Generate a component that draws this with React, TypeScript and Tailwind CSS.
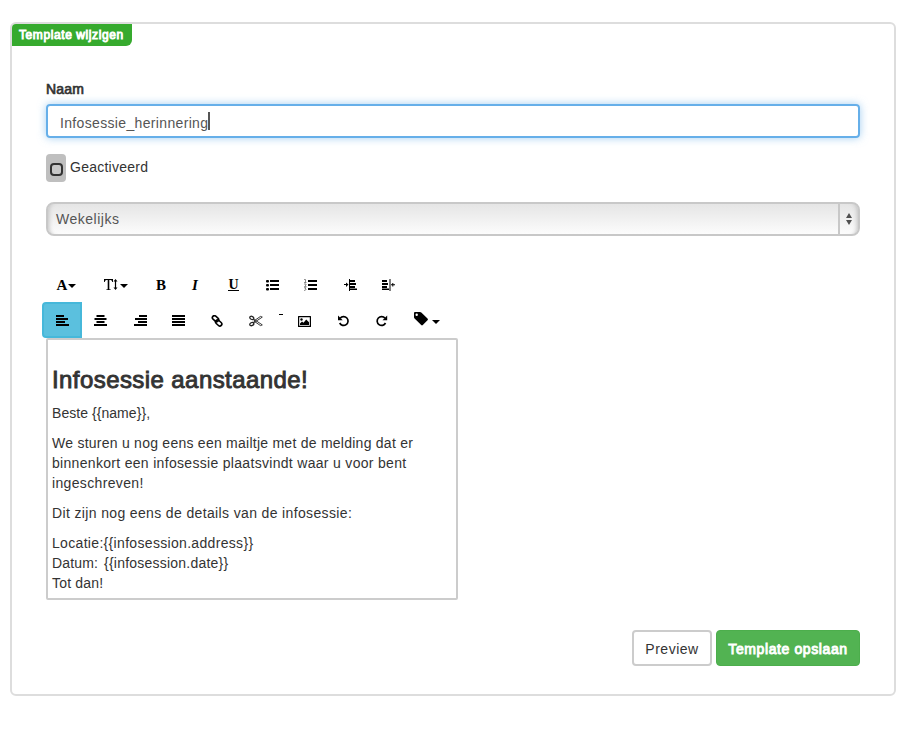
import type { ReactNode } from 'react';

function Glyph({ children, w = 13, h = 12, className = '' }: { children: ReactNode; w?: number; h?: number; className?: string }) {
  return (
    <svg width={w} height={h} viewBox={`0 0 ${w} ${h}`} className={`block shrink-0 ${className}`} fill="black">
      {children}
    </svg>
  );
}

const Caret = ({ className = '' }: { className?: string }) => (
  <Glyph w={8} h={4} className={className}>
    <path d="M0 0h8L4 4z" />
  </Glyph>
);

function Lines({ rows }: { rows: [number, number][] }) {
  return (
    <Glyph>
      {rows.map(([x, w], i) => (
        <rect key={i} x={x} y={i * 3} width={w} height={2} />
      ))}
    </Glyph>
  );
}

function Cell({ className, children }: { className: string; children: ReactNode }) {
  return <button type="button" className={`flex h-9 shrink-0 items-start ${className}`}>{children}</button>;
}

const serif = "font-['Liberation_Serif',serif] text-[15px] leading-4 font-bold text-black";

function Toolbar() {
  return (
    <div className="-ml-1">
      <div className="flex pl-[14px]">
        <Cell className="w-12 pt-[11px]">
          <span className={`${serif} w-[12px]`}>A</span>
          <Caret className="mt-[7px]" />
        </Cell>
        <Cell className="w-[52px] pt-[13px]">
          <Glyph w={14}>
            <path d="M0 0h9v3h-.7Q8 1 6.5.9H5.3v8.8q0 .8 1.5.9v.4H2.2v-.4q1.5-.1 1.5-.9V.9H2.5Q1 1 .7 3H0zM11.5 0l2 2.5h-1.4v6h1.4l-2 2.5-2-2.5h1.4v-6H9.5z" />
          </Glyph>
          <Caret className="mt-[5px] ml-0.5" />
        </Cell>
        <Cell className="w-9 pt-[11px]"><span className={serif}>B</span></Cell>
        <Cell className="w-9 pt-[11px]"><span className={`${serif} italic`}>I</span></Cell>
        <Cell className="w-[38px] pt-[13px]">
          <span className="h-3 w-[11px] border-b border-black text-center font-['Liberation_Serif',serif] text-sm leading-[11px] font-bold text-black">U</span>
        </Cell>
        <Cell className="w-[38px] pt-[14px]">
          <Glyph>
            {[0, 4, 8].map((y) => (
              <g key={y}><rect y={y} width="3" height="2.5" rx="1" /><rect x="4" y={y} width="9" height="2" /></g>
            ))}
          </Glyph>
        </Cell>
        <Cell className="w-10 pt-[13px]">
          <Glyph>
            <path d="M4 1h9v2H4zM4 5h9v2H4zM4 9h9v2H4z" />
            <path d="M0 .5h1.5v3M0 3.5h2.5M0 5h2v1L.5 7.5h2M0 8.7h2L1 10q1 0 1 .6T0 11.5" fill="none" stroke="#555" strokeWidth=".65" />
          </Glyph>
        </Cell>
        <Cell className="w-[38px] pt-[13px]">
          <Glyph>
            <path d="M5 0h1v12H5zM0 5h4v1H0zM2 3.5l2.5 2L2 8zM6 1h5v2H6zM6 4h6v2H6zM6 7h5v2H6zM6 9.5h7v1.5H6z" />
          </Glyph>
        </Cell>
        <Cell className="w-[38px] pt-[13px]">
          <Glyph>
            <path d="M7.5 0h1v12h-1zM9 5.2h4v1H9zM10.3 4h1v3.4h-1zM0 1h5v2H0zM0 4h6v2H0zM0 7h5v2H0zM0 9.5h7v1.5H0z" />
          </Glyph>
        </Cell>
      </div>
      <div className="flex">
        <Cell className="w-10 rounded-l-[4px] border-2 border-[#46b8da] bg-[#5bc0de] pt-[11px] pl-3">
          <Lines rows={[[0, 8], [0, 12], [0, 9], [0, 13]]} />
        </Cell>
        <Cell className="w-10 pt-[13px] pl-3"><Lines rows={[[2.5, 8], [0.5, 12], [2.5, 8], [0, 13]]} /></Cell>
        <Cell className="w-[38px] pt-[13px] pl-3"><Lines rows={[[5, 8], [1, 12], [4, 9], [0, 13]]} /></Cell>
        <Cell className="w-[39px] pt-[13px] pl-3"><Lines rows={[[0, 13], [0, 13], [0, 13], [0, 13]]} /></Cell>
        <Cell className="w-[38px] pt-[13px] pl-3">
          <Glyph h={13}>
            <g fill="none" stroke="black" strokeWidth="1.6">
              <rect x="1" y="1.7" width="7" height="4" rx="2" transform="rotate(42 4.5 3.7)" />
              <rect x="4.2" y="6" width="7" height="4" rx="2" transform="rotate(42 7.7 8)" />
            </g>
          </Glyph>
        </Cell>
        <Cell className="w-[30px] pt-[13px] pl-3">
          <Glyph w={14} h={13}>
            <g fill="none" stroke="#222" strokeWidth="1.3">
              <ellipse cx="2.8" cy="2.9" rx="2.1" ry="1.5" transform="rotate(25 2.8 2.9)" />
              <ellipse cx="2.8" cy="9.1" rx="2.1" ry="1.5" transform="rotate(-25 2.8 9.1)" />
              <path d="M4.5 4l8.8 5.9-1.8.7L4.8 6M4.5 8l8.8-5.9-1.8-.7L4.8 6" strokeWidth=".9" />
            </g>
          </Glyph>
        </Cell>
        <Cell className="w-[19px] pt-[12px] pl-3"><span className="h-px w-1 bg-black" /></Cell>
        <Cell className="w-10 pt-[14px] pl-3">
          <Glyph>
            <path fillRule="evenodd" d="M.5 0h12q.5 0 .5.5v10q0 .5-.5.5H.5q-.5 0-.5-.5V.5Q0 0 .5 0zM1.2 1.2v8.6h10.6V1.2z" />
            <circle cx="3.5" cy="3.5" r="1.2" /><path d="M2 9V7.5l2-2 1.5 1.3L8.2 3.5 11 6.2V9z" />
          </Glyph>
        </Cell>
        <Cell className="w-[38px] pt-[13px] pl-3">
          <Glyph>
            <path d="M2.2 3.3A4.4 4.4 0 1 1 1.7 8" fill="none" stroke="black" strokeWidth="1.7" /><path d="M0 .6v4.7h4.7z" />
          </Glyph>
        </Cell>
        <Cell className="w-[38px] pt-[13px] pl-3">
          <Glyph>
            <path d="M9 3.3A4.4 4.4 0 1 0 9.5 8" fill="none" stroke="black" strokeWidth="1.7" /><path d="M11.2.6v4.7H6.5z" />
          </Glyph>
        </Cell>
        <Cell className="w-12 pt-[10px] pl-3">
          <Glyph w={14} h={14}>
            <path fillRule="evenodd" d="M0 1q0-1 1-1h5q.7 0 1.3.6l6.2 6q.8.8 0 1.6L8.8 13q-.8.8-1.6 0L.6 6.6Q0 6 0 5zM2.7 1.5a1.2 1.2 0 1 0 0 2.4 1.2 1.2 0 0 0 0-2.4z" />
          </Glyph>
          <Caret className="mt-2 ml-1" />
        </Cell>
      </div>
    </div>
  );
}

export default function App() {
  return (
    <div className="h-[746px] w-[908px] bg-white pt-[22px] pl-[10px] font-['Liberation_Sans',Arial,sans-serif] text-sm leading-5 text-[#333]">
      <main className="h-[674px] w-[886px] rounded-md border-2 border-[#ddd]">
        <h1 className="h-[22px] w-[120px] rounded-tl-[4px] rounded-br-[6px] bg-[#36aa2e] pl-[7px] text-xs leading-[23px] tracking-[0.59px] whitespace-nowrap text-white [-webkit-text-stroke:0.9px_white]">Template wijzigen</h1>
        <form className="px-[34px] pt-[33px]">
          <label className="block h-[25px] text-sm tracking-[0.15px] [-webkit-text-stroke:0.7px_#333]">Naam</label>
          <div className="flex h-[34px] items-center rounded-[4px] border-2 border-[#66afe9] pt-[3px] pl-3 text-[#555] shadow-[0_0_8px_rgba(102,175,233,0.6)]">
            <span className="tracking-[0.34px]">Infosessie_herinnering</span>
            <span className="-mt-1 h-[18px] w-[2px] bg-[#555]" />
          </div>
          <div className="mt-4 flex h-7">
            <span className="flex w-5 justify-center rounded-[4px] bg-[#bfbfbf] pt-[9px]">
              <span className="h-[13px] w-[13px] rounded-[4px] border-2 border-[#333] bg-[#c8c8c8]" />
            </span>
            <span className="ml-1 pt-[3px] tracking-[0.25px]">Geactiveerd</span>
          </div>
          <div className="mt-5 flex h-[34px] rounded-[8px] border-2 border-[#c8c8c8] bg-linear-to-b from-[#e5e5e5] to-[#fcfcfc] text-[#555] shadow-[inset_5px_0_4px_-4px_#c0c0c0,inset_-5px_0_4px_-4px_#c0c0c0]">
            <span className="flex-1 pt-[5px] pl-2 tracking-[0.52px]">Wekelijks</span>
            <span className="flex w-5 justify-center border-l-2 border-[#c8c8c8] pt-[9px]">
              <Glyph w={6} h={13}><path d="M0 5l3-5 3 5zM0 7h6l-3 5z" fill="#505050" /></Glyph>
            </span>
          </div>
          <div className="mt-[30px]"><Toolbar /></div>
          <div className="h-[262px] w-[412px] rounded-[2px] border-2 border-[#ccc] px-1 pt-[27px] whitespace-nowrap">
            <h2 className="mb-[10px] text-2xl leading-[26px] tracking-[0.42px] [-webkit-text-stroke:0.9px_#333]">Infosessie aanstaande!</h2>
            <p className="mb-[10px] tracking-[0.05px]">Beste {'{{name}}'},</p>
            <p className="mb-[10px]">
              <span className="tracking-[0.25px]">We sturen u nog eens een mailtje met de melding dat er</span><br />
              <span className="tracking-[0.31px]">binnenkort een infosessie plaatsvindt waar u voor bent</span><br />
              <span className="tracking-[0.35px]">ingeschreven!</span>
            </p>
            <p className="mb-[10px] tracking-[0.36px]">Dit zijn nog eens de details van de infosessie:</p>
            <p>
              <span className="tracking-[0.32px]">Locatie:{'{{infosession.address}}'}</span><br />
              <span className="tracking-[0.15px]">Datum:&nbsp;</span><span className="ml-[2px] tracking-[0.22px]">{'{{infosession.date}}'}</span><br />
              <span className="tracking-[0.2px]">Tot dan!</span>
            </p>
          </div>
          <div className="mt-[30px] flex justify-end gap-1">
            <button type="button" className="h-9 w-20 rounded-[4px] border-2 border-[#ccc] pt-0.5 tracking-[0.5px]">Preview</button>
            <button type="button" className="h-9 w-36 rounded-[4px] border border-[#4cae4c] bg-[#52b352] pt-0.5 tracking-[0.6px] text-white [-webkit-text-stroke:0.9px_white]">Template opslaan</button>
          </div>
        </form>
      </main>
    </div>
  );
}
